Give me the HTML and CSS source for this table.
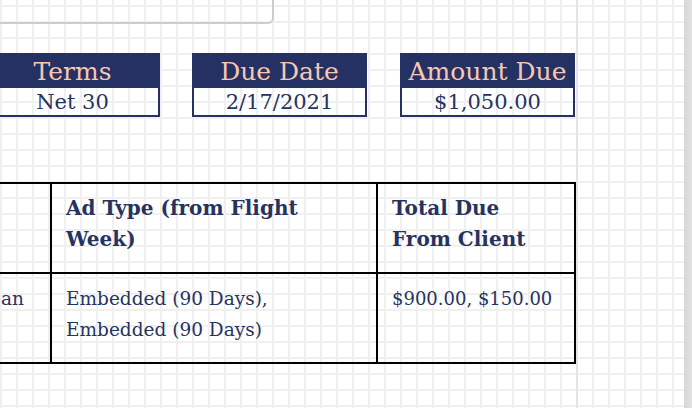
FILE: index.html
```html
<!DOCTYPE html>
<html lang="en">
<head>
<meta charset="utf-8">
<title>Invoice</title>
<link rel="stylesheet" href="styles.css">
</head>
<body>
<div class="screen">
  <div class="sheet">
    <div class="topcard"></div>
    <div class="summary">
      <div class="sbox">
        <div class="sbox-head">Terms</div>
        <div class="sbox-val">Net 30</div>
      </div>
      <div class="sbox">
        <div class="sbox-head">Due Date</div>
        <div class="sbox-val">2/17/2021</div>
      </div>
      <div class="sbox">
        <div class="sbox-head">Amount Due</div>
        <div class="sbox-val">$1,050.00</div>
      </div>
    </div>
    <table class="lines">
      <colgroup>
        <col class="c1">
        <col class="c2">
        <col class="c3">
      </colgroup>
      <thead>
        <tr>
          <th class="first"></th>
          <th>Ad Type (from Flight<br>Week)</th>
          <th>Total Due<br>From Client</th>
        </tr>
      </thead>
      <tbody>
        <tr>
          <td class="first"><span class="cut">an</span></td>
          <td>Embedded (90 Days),<br>Embedded (90 Days)</td>
          <td class="money">$900.00, $150.00</td>
        </tr>
      </tbody>
    </table>
  </div>
  <div class="filler"></div>
  <div class="scrollbar"></div>
</div>
</body>
</html>
```

FILE: styles.css
```css
html, body {
  margin: 0;
  padding: 0;
  width: 692px;
  height: 408px;
  overflow: hidden;
}

.screen {
  display: flex;
  width: 692px;
  height: 408px;
  background-color: #ffffff;
  background-image:
    linear-gradient(to right, #f0f0f0 2px, transparent 2px),
    linear-gradient(to bottom, #f0f0f0 2px, transparent 2px);
  background-size: 16px 16px;
  background-position: 0 5px;
  font-family: "DejaVu Serif", serif;
  color: #26335f;
}

.sheet {
  flex: none;
  width: 576px;
  height: 408px;
  border-right: 2px solid #e4e4e4;
}

.topcard {
  width: 274px;
  height: 24px;
  box-sizing: border-box;
  border-right: 2px solid #cdcdcd;
  border-bottom: 2px solid #cdcdcd;
  border-bottom-right-radius: 6px;
}

.summary {
  display: flex;
  gap: 32px;
  margin: 29px 0 0 -15px;
}

.sbox {
  width: 175px;
  height: 64px;
  box-sizing: border-box;
  border: 2px solid #243162;
  display: flex;
  flex-direction: column;
}

.sbox:last-child {
  margin-left: 1px;
}

.sbox-head {
  height: 33px;
  line-height: 33px;
  background: #243162;
  color: #f6c8b4;
  font-size: 25px;
  text-align: center;
}

.sbox-val {
  height: 27px;
  line-height: 29px;
  font-size: 21px;
  text-align: center;
  color: #26335f;
}

.lines {
  margin-top: 65px;
  width: 576px;
  table-layout: fixed;
  border-collapse: separate;
  border-spacing: 0;
  border-top: 2px solid #000;
  border-bottom: 2px solid #000;
  border-right: 2px solid #000;
}

.c1 { width: 50px; }
.c2 { width: 326px; }
.c3 { width: 198px; }

.lines th,
.lines td {
  vertical-align: top;
  text-align: left;
  padding: 9px 10px 0 14px;
  line-height: 31px;
  border-left: 2px solid #000;
  color: #26335f;
}

.lines th.first,
.lines td.first {
  border-left: none;
  padding-left: 1px;
  padding-right: 0;
}

.lines th {
  height: 79px;
  font-size: 20px;
  font-weight: bold;
  border-bottom: 2px solid #000;
}

.lines td {
  height: 79px;
  font-size: 18.5px;
}

.lines td.money {
  font-size: 18px;
}

.cut {
  white-space: nowrap;
}

.filler {
  flex: 1;
}

.scrollbar {
  flex: none;
  width: 8px;
  height: 408px;
  background: linear-gradient(to right, #d6d6d6, #e2e2e2);
}
```
